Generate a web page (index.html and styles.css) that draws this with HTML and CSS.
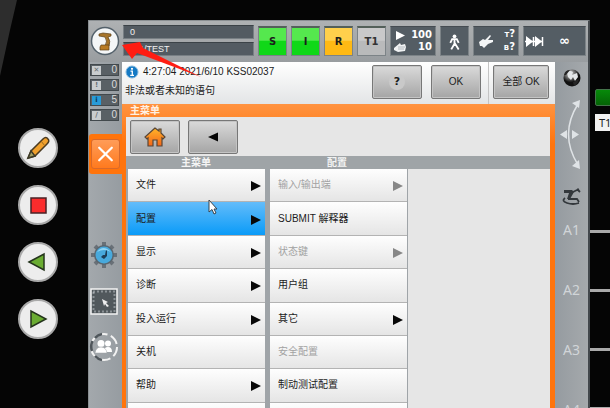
FILE: index.html
```html
<!DOCTYPE html>
<html lang="zh-CN">
<head>
<meta charset="utf-8">
<title>主菜单</title>
<link rel="stylesheet" href="styles.css">
</head>
<body>
<nav class="rail">
  <svg class="wedge" viewBox="0 0 18 76"><path d="M0 0H17L10 30L0 76z" fill="#2d2d2d"/></svg>
  <button class="round" aria-label="编辑"><svg viewBox="0 0 40 40"><path d="M10 30L13 23L25 11Q28 8 30 11Q32 13 29 16L17 28z" fill="#f0a02c" stroke="#4a3a20" stroke-width="1.5"/><path d="M10 30L13 23L17 28z" fill="#a5a164" stroke="#3c3a28" stroke-width="1.5"/><path d="M23 13L27 18" stroke="#9a6a20"/></svg></button>
  <button class="round" aria-label="停止"><svg viewBox="0 0 40 40"><path d="M13 13H28V28H13z" fill="#fb2c2c" stroke="#4a2226" stroke-width="1.5"/></svg></button>
  <button class="round" aria-label="后退"><svg viewBox="0 0 40 40"><path d="M11 20L26 12V28z" fill="#6aac32" stroke="#24341c" stroke-width="1.5"/></svg></button>
  <button class="round" aria-label="前进"><svg viewBox="0 0 40 40"><path d="M13 12V28L28 20z" fill="#6aac32" stroke="#24341c" stroke-width="1.5"/></svg></button>
</nav>

<main class="panel">
  <header class="top">
    <button class="logo" aria-label="主菜单"><svg viewBox="0 0 30 30"><circle cx="15" cy="15" r="13.5" fill="#f4f6f7" stroke="#54616b" stroke-width="1.5"/><path d="M9 8L13 7L21 8V10L18 11Q21 15 19 20H15Q18 15 15 11L9 10z" fill="#a6742a" stroke="#5c4018" stroke-width=".7"/><path d="M11 19H19V24H10V21z" fill="#b97b24" stroke="#5c4018" stroke-width=".7"/></svg></button>
    <div class="fields"><div class="field">0</div><div class="field">/R1/TEST</div></div>
    <button class="lamp green">S</button>
    <button class="lamp green">I</button>
    <button class="lamp yellow">R</button>
    <button class="lamp gray">T1</button>
    <button class="tile wide speed">
      <svg viewBox="0 0 16 28"><path d="M5 4L14 8.500L5 13z" fill="#fff"/><path d="M3 21L9 16L10 18L14 17L15 20L14 24L7 25L3 23z" fill="#f1f3f4"/><path d="M7 20H14M7 22H13" stroke="#89939a" stroke-width=".6"/></svg>
      <span>100<br>10</span>
    </button>
    <button class="tile walk" aria-label="步进"><svg viewBox="0 0 29 28"><circle cx="14.500" cy="9" r="2" fill="#fff"/><path d="M14.500 11V17L11 23M14.500 16L19 23M10 16L12 12H17L19 16" fill="none" stroke="#fff" stroke-width="2"/></svg></button>
    <button class="tile wide tool">
      <svg viewBox="0 0 20 28"><path d="M4 15L8 12L10 13L15 8L16 9L13 13L18 13V15L13 17L9 21L7 19L5 19z" fill="#f4f6f7"/></svg>
      <span><small>T</small>?<br><small>B</small>?</span>
    </button>
    <button class="tile last">
      <svg viewBox="0 0 20 28"><path d="M2 9L9 14.500L2 20zM11 9L18 14.500L11 20z" fill="#fff"/><path d="M1 14.500H19M9.500 10V19M18.500 10V19" stroke="#fff" stroke-width="1.500"/></svg>
      <span>∞</span>
    </button>
  </header>

  <div class="body">
    <aside class="status">
      <ul class="counts">
        <li><i class="mark">✕</i><span>0</span></li>
        <li><i class="mark">!</i><span>0</span></li>
        <li><i class="mark blue">i</i><span>5</span></li>
        <li><i class="mark">/</i><span>0</span></li>
      </ul>
      <button class="close" aria-label="关闭"><svg viewBox="0 0 30 30"><path d="M8 8L22 22M22 8L8 22" stroke="#fff" stroke-width="2.500" stroke-linecap="round"/></svg></button>
      <div class="shortcuts">
        <svg viewBox="0 0 30 30"><g stroke="#697077" stroke-width="4"><path d="M15 2V28M2 15H28M6 6L24 24M24 6L6 24"/></g><circle cx="15" cy="15" r="10" fill="#5a656e"/><circle cx="15" cy="15" r="8.500" fill="#48a9dc"/><path d="M8 12Q14 4 22 12Q15 8 8 12" fill="#90d4f4"/><path d="M17 10L18 11V16L15 19L12 17L14 15L16 15z" fill="#1d3d57"/></svg>
        <svg viewBox="0 0 30 30"><path d="M2 3H28V28H2z" fill="#51585c" stroke="#f4f4f4" stroke-width="1.500"/><path d="M4.500 5.500H25.500V25.500H4.500z" fill="none" stroke="#c8cccf" stroke-width="2" stroke-dasharray="1 3"/><path d="M13 13L19 16L17 17L20 20L18 21L16 18L15 20z" fill="#eee"/></svg>
        <svg viewBox="0 0 30 30"><circle cx="15" cy="15" r="13" fill="none" stroke="#f2f2f2" stroke-width="2" stroke-dasharray="10 3.600"/><path d="M13 2A13 13 0 0 0 6 6M3.500 9A13 13 0 0 0 3 19M6 24A13 13 0 0 0 13 28" fill="none" stroke="#4f565b" stroke-width="2.500"/><g fill="#fff"><circle cx="19" cy="11.500" r="3"/><path d="M14 20Q15 15 19 15Q23 15 23 20z"/><circle cx="12" cy="11.500" r="3.500"/><path d="M6 21Q7 15 12 15Q17 15 18 21z" stroke="#9ca1a5" stroke-width=".5"/></g></svg>
      </div>
    </aside>

    <section class="center">
      <div class="message">
        <div class="text">
          <p><svg viewBox="0 0 14 14"><circle cx="7" cy="7" r="6" fill="#1479c4" stroke="#7fb5dc"/><circle cx="7" cy="3.800" r="1.100" fill="#fff"/><path d="M5.500 6.200H7.300V10.300M5.200 10.300H9" fill="none" stroke="#fff" stroke-width="1.300"/></svg>4:27:04 2021/6/10 KSS02037</p>
          <p>非法或者未知的语句</p>
        </div>
        <button class="btn help"><b>?</b></button>
        <button class="btn">OK</button>
        <div class="all"><button class="btn">全部 OK</button></div>
      </div>
      <div class="window">
        <h1>主菜单</h1>
        <div class="tools">
          <button class="btn" aria-label="主页"><svg viewBox="0 0 24 24"><defs><linearGradient id="h" x2="0" y2="1"><stop stop-color="#ffb529"/><stop offset="1" stop-color="#f4661a"/></linearGradient></defs><path d="M12 3L2 12L4 14L5 13V21H10V15H14V21H19V13L20 14L22 12L18 8V4H16V6z" fill="url(#h)" stroke="#574638" stroke-width="1.200"/></svg></button>
          <button class="btn" aria-label="返回"><svg viewBox="0 0 24 24"><path d="M7 12L17 7.500V16.500z" fill="#050505"/></svg></button>
        </div>
        <div class="heads"><h2>主菜单</h2><h2>配置</h2></div>
        <div class="menus">
          <ul class="menu">
            <li><button class="more">文件</button></li>
            <li><button class="more on">配置</button></li>
            <li><button class="more">显示</button></li>
            <li><button class="more">诊断</button></li>
            <li><button class="more">投入运行</button></li>
            <li><button>关机</button></li>
            <li><button class="more">帮助</button></li>
            <li><button aria-label="空"></button></li>
          </ul>
          <ul class="menu">
            <li><button class="more" disabled>输入/输出端</button></li>
            <li><button>SUBMIT 解释器</button></li>
            <li><button class="more" disabled>状态键</button></li>
            <li><button>用户组</button></li>
            <li><button class="more">其它</button></li>
            <li><button disabled>安全配置</button></li>
            <li><button>制动测试配置</button></li>
            <li><button aria-label="空"></button></li>
          </ul>
          <div class="blank"></div>
        </div>
      </div>
    </section>

    <aside class="axes">
      <svg class="globe" viewBox="0 0 32 32"><defs><radialGradient id="g" cx=".4" cy=".25"><stop stop-color="#ddd"/><stop offset=".5" stop-color="#777"/><stop offset="1" stop-color="#111"/></radialGradient></defs><circle cx="17" cy="16" r="8.500" fill="url(#g)"/><path d="M12 10Q15 8 18 10L17 13L22 11L23 15L20 19L18 15L16 18L13 15z" fill="#e3e6e8"/><path d="M9 13Q10 8 15 8L11 13zM18 20L24 17Q23 22 19 24z" fill="#252525"/></svg>
      <svg class="arc" viewBox="0 0 32 72"><path d="M23 5Q4 35 23 66" fill="none" stroke="#dfe3e6" stroke-width="1.500"/><path d="M17 4L25 1L24 9zM17 67L25 70L24 61zM5 35.500L12 31V40zM24 35.500L17 31V40z" fill="#dfe3e6"/></svg>
      <svg class="arm" viewBox="0 0 32 32"><path d="M9 9H17L19 11L15 18H12L14 12L9 12z" fill="#33383c"/><path d="M18 11L24 8M22 8L25 11M13 18H22L24 21M10 17Q6 20 12 22Q18 24 24 22" fill="none" stroke="#33383c" stroke-width="1.800"/></svg>
      <ol><li>A1</li><li>A2</li><li>A3</li><li>A4</li></ol>
    </aside>
  </div>
</main>

<aside class="outer">
  <button class="go" aria-label="运行"></button>
  <span class="mode">T1</span>
  <div class="slots"><i></i><i></i><i></i><i></i></div>
</aside>

<svg class="pointer-arrow" viewBox="0 0 80 36"><path d="M0 4L18 1L21 7L79 36L15 12L10 18z" fill="#ff1d12"/></svg>
<svg class="cursor" viewBox="0 0 10 16"><path d="M1 1V13L4 10.500L6 15L8 14L6 10H9z" fill="#fff" stroke="#39424a"/></svg>
</body>
</html>
```
FILE: styles.css
```css
* { box-sizing: border-box; margin: 0; padding: 0; }
html, body { height: 100%; overflow: hidden; }
body {
  position: relative;
  display: flex;
  background: #050505;
  color: #1c1c1c;
  font: 10px/16px "Liberation Sans", "Noto Sans CJK SC", sans-serif;
}
button { border: 0; background: none; font: inherit; color: inherit; }
ul, ol { list-style: none; }
svg { display: block; }

.rail {
  position: relative;
  flex: 0 0 88px;
  display: flex;
  flex-direction: column;
  gap: 17px;
  padding: 128px 0 0 18px;
}
.wedge { position: absolute; top: 0; left: 0; width: 18px; height: 76px; }
.round {
  flex: none;
  width: 40px;
  height: 40px;
  border: 2px solid #a9a9a9;
  border-radius: 50%;
  background: #ededed;
}
.round svg { width: 40px; height: 40px; margin: -2px; }

.panel {
  flex: 1;
  display: flex;
  flex-direction: column;
  margin-top: 20px;
  border: 1px solid #8a8f92;
  border-bottom: 0;
  border-right: 2px solid #43484c;
  background: #9da3a7;
  overflow: hidden;
}
.top {
  flex: none;
  display: flex;
  align-items: center;
  gap: 4px;
  height: 41px;
  padding: 0 2px 2px 1px;
  background: linear-gradient(#aeb1b3, #999da0);
}
.logo { width: 29px; height: 30px; }
.logo svg { width: 30px; height: 30px; }
.fields { flex: 1; display: grid; gap: 3px; }
.field {
  height: 14px;
  padding-left: 6px;
  border: 1px solid #787f84;
  border-top-color: #3b4247;
  background: #535b62;
  color: #f1f1f1;
  font-size: 9px;
  line-height: 13px;
}
.lamp, .tile {
  height: 30px;
  width: 29px;
  border: 1px solid #7c8387;
  border-top: 2px solid #53605a;
}
.lamp { font: bold 10px "DejaVu Sans", sans-serif; }
.green { background: linear-gradient(#55e84e 45%, #10d818 50%); }
.yellow { background: linear-gradient(#ffd04c 45%, #ffb914 50%); }
.gray { background: linear-gradient(#c9c9ca 45%, #b9babb 50%); color: #333; }
.tile {
  display: flex;
  align-items: center;
  border-top: 1px solid #454c52;
  background: #545d64;
  color: #fff;
  font: bold 10px/12px "DejaVu Sans", sans-serif;
}
.tile svg { height: 28px; }
.tile.wide { width: 46px; justify-content: space-between; padding-right: 3px; text-align: right; }
.speed svg { width: 16px; }
.walk svg { width: 27px; }
.tool svg { width: 20px; margin-left: 1px; }
.tool small { font-size: 7px; }
.tile.last { width: 63px; gap: 15px; }
.last svg { width: 20px; }
.last span { font-size: 13px; }

.body { flex: 1; display: flex; min-height: 0; }
.status {
  flex: 0 0 33px;
  display: flex;
  flex-direction: column;
  background: linear-gradient(90deg, #a3a8ac, #969ca1);
}
.counts { display: grid; gap: 3px; padding: 2px 3px 0 1px; }
.counts li {
  display: flex;
  justify-content: space-between;
  align-items: center;
  height: 12px;
  padding: 0 1px;
  border: 1px solid #42494d;
  background: #596065;
  color: #dcdcdc;
  line-height: 10px;
}
.mark {
  width: 9px;
  height: 9px;
  background: #c9cdcf;
  color: #697075;
  font: bold 7px/9px "DejaVu Sans", sans-serif;
  text-align: center;
}
.blue { background: #289bd8; color: #07395c; }
.close {
  margin-top: 13px;
  height: 40px;
  padding: 4px 2px;
  border-radius: 3px 0 0 3px;
  background: #ff740c;
}
.close svg {
  width: 29px;
  height: 30px;
  border: 1px solid #d9692a;
  border-radius: 3px;
  background: linear-gradient(#ff9c58, #ff7a1e);
}
.shortcuts { display: grid; gap: 16px; padding: 66px 2px 0 0; }
.shortcuts svg { width: 30px; height: 30px; }

.center { flex: 1; min-width: 0; display: flex; flex-direction: column; }
.message {
  flex: none;
  display: flex;
  align-items: flex-start;
  height: 42px;
  background: linear-gradient(#fff, #e3e5e6);
  padding-top: 3px;
}
.text { flex: 1; padding-left: 3px; line-height: 18px; white-space: nowrap; }
.text p { display: flex; align-items: center; gap: 4px; height: 18px; margin-top: -2px; }
.text p + p { margin-top: 1px; }
.text svg { width: 14px; height: 14px; }
.btn {
  width: 50px;
  height: 34px;
  border: 1px solid #777;
  border-radius: 2px;
  background: linear-gradient(#dadada, #a5a5a5);
  box-shadow: inset 0 0 0 1px #c4c4c4;
}
.help { margin-right: 9px; }
.help b {
  display: inline-block;
  width: 16px;
  border-radius: 50%;
  background: #c9c9c9;
  font: bold 11px/16px "DejaVu Sans", sans-serif;
}
.all { margin: -3px 0 0 7px; padding: 3px 6px 5px 4px; border-left: 1px solid #c4c4c4; }
.all .btn { width: 56px; }

.window {
  flex: 1;
  min-height: 0;
  display: flex;
  flex-direction: column;
  padding: 0 5px 0 4px;
  background: linear-gradient(#ff9340, #ff740c 40px);
}
h1 {
  padding-left: 4px;
  color: #fff1e4;
  font-size: 10px;
  line-height: 13px;
}
.tools {
  display: flex;
  gap: 8px;
  padding: 3px 4px 2px;
  background: #e6e6e6;
}
.tools svg { width: 24px; height: 24px; margin: auto; }
.heads {
  display: grid;
  grid-template-columns: 140px 142px;
  background: #9fa4a7;
}
h2 {
  color: #f4f4f4;
  font-size: 10px;
  line-height: 13px;
  text-align: center;
}
.menus {
  flex: 1;
  display: flex;
  gap: 5px;
  min-height: 0;
  padding-left: 2px;
  background: #9fa4a8;
}
.menu {
  flex: 0 0 137px;
  display: grid;
  grid-auto-rows: 1fr;
  height: 267px;
}
.menu button {
  position: relative;
  display: block;
  width: 100%;
  height: 100%;
  padding: 0 8px;
  border-bottom: 1px solid #b3b3b3;
  background: linear-gradient(#fefefe, #e5e5e5);
  text-align: left;
}
.menu button:disabled { color: #a2a2a2; }
.menu .on { background: linear-gradient(#63bcfa, #0a9bf8); }
.more::after {
  content: "";
  position: absolute;
  right: 4px;
  top: 50%;
  margin-top: -4px;
  border: solid transparent;
  border-width: 5px 0 5px 10px;
  border-left-color: #080808;
}
.more:disabled::after { border-left-color: #878787; }
.blank { flex: 1; margin-left: -4px; background: #e6e6e6; }

.axes {
  flex: 0 0 33px;
  display: flex;
  flex-direction: column;
  background: linear-gradient(90deg, #959ba0, #a5a9ac);
}
.axes svg { flex: none; width: 32px; }
.globe { height: 32px; }
.arc { height: 72px; margin-top: 5px; }
.arm { height: 32px; margin-top: 10px; }
.axes ol { padding-top: 7px; }
.axes li {
  height: 60px;
  color: #d1d5d8;
  font: 14px/20px "Noto Sans", sans-serif;
  text-align: center;
}

.outer { flex: 0 0 20px; padding-top: 89px; overflow: hidden; }
.go {
  display: block;
  width: 20px;
  height: 17px;
  margin-left: 5px;
  border: 1px solid #44734a;
  border-radius: 2px 0 0 2px;
  background: linear-gradient(#078a0a, #056306);
}
.mode {
  display: block;
  width: 20px;
  margin: 8px 0 0 5px;
  padding-left: 4px;
  background: #f2f2f2;
  font: 11px/17px "Noto Sans", sans-serif;
}
.slots { padding-top: 99px; }
.slots i { display: block; height: 59px; border-top: 3px solid #aaa; }

.pointer-arrow { position: absolute; left: 122px; top: 41px; width: 80px; height: 36px; }
.cursor { position: absolute; left: 208px; top: 199px; width: 10px; height: 16px; }
```
